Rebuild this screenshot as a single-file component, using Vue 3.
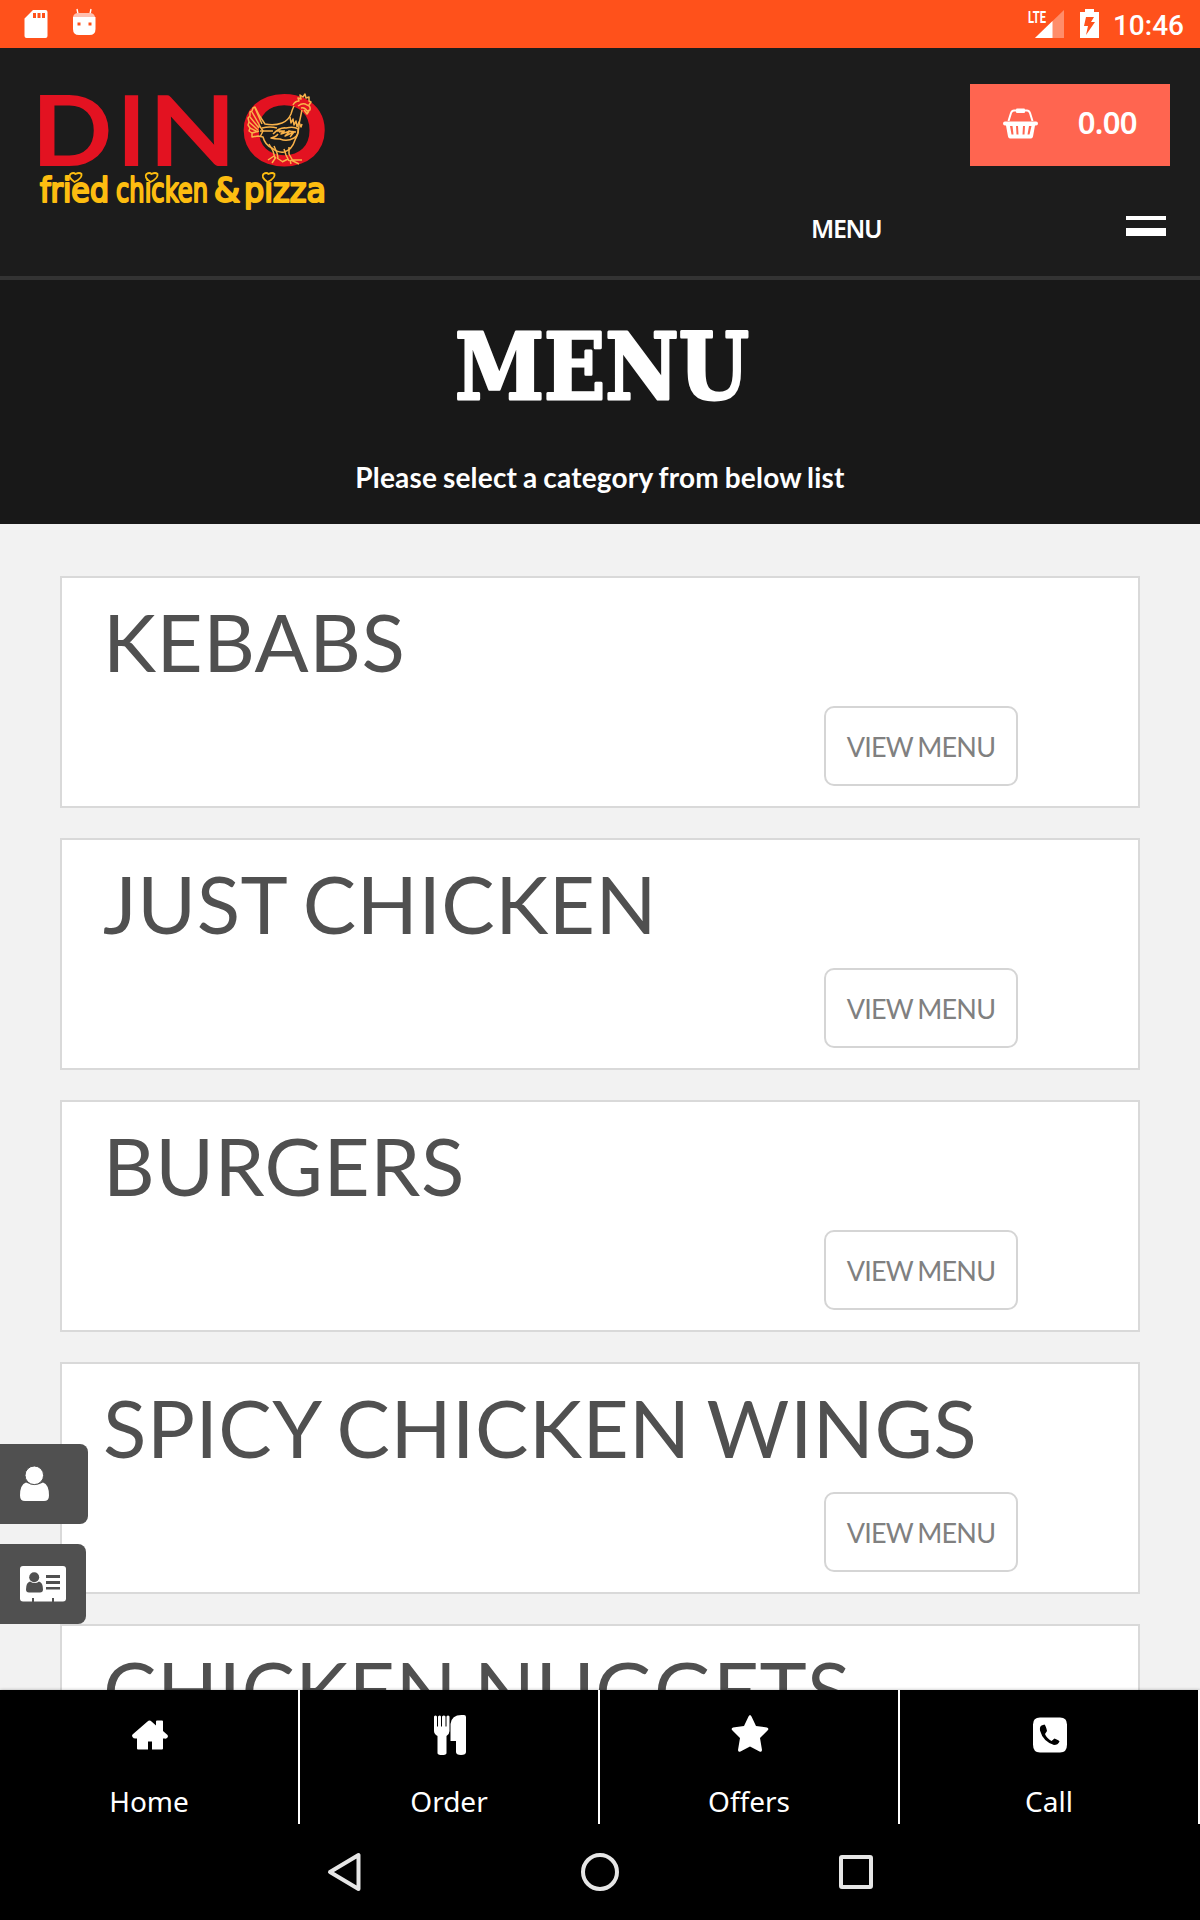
<template>
  <div class="screen">
    <div class="status-bar">
      <div class="status-left">
        <svg class="sd-icon" viewBox="0 0 24 28">
          <path fill="#fff" fill-rule="evenodd" d="M9 0h12.500q2 0 2 2v24q0 2-2 2H2.500q-2 0-2-2V8.500zM9 3v5h3V3zM13.500 3v5h3V3zM18 3v5h3V3z" />
        </svg>
        <svg class="droid-icon" viewBox="0 0 24 28">
          <path d="M6 6L5 1M18 6l1-5" stroke="#fff" stroke-width="1.400" />
          <path d="M1 9q1-4 5-4h12q4 0 5 4z" fill="#ffc0b0" />
          <path fill="#fff" fill-rule="evenodd" d="M1 9h22.500v12q0 6-6 6H7q-6 0-6-6zM5.500 14.500v3h3v-3zM16.500 14.500v3h3v-3z" />
        </svg>
      </div>
      <div class="status-right">
        <svg class="signal-icon" viewBox="0 0 36 30">
          <text x="0" y="13.500" textLength="18" lengthAdjust="spacingAndGlyphs" class="lte">LTE</text>
          <path d="M36 1v28H7z" fill="#fff" opacity="0.350" />
          <path d="M24.500 12v17H7z" fill="#fff" />
        </svg>
        <svg class="battery-icon" viewBox="0 0 19 29">
          <path fill="#fff" fill-rule="evenodd" d="M5 0h9v3h5v26H0V3h5zM6 8l-2 9h4l-2 9 9-13h-4l3-5z" />
        </svg>
        <span class="clock">10:46</span>
      </div>
    </div>

    <header class="header">
      <svg class="logo" viewBox="0 0 300 130">
        <g class="logo-name">
          <text x="-4.500" y="81.500" textLength="81" lengthAdjust="spacingAndGlyphs">D</text>
          <text x="81" y="81.500">I</text>
          <text x="112.500" y="81.500" textLength="88" lengthAdjust="spacingAndGlyphs">N</text>
          <text x="203.500" y="81.500" textLength="89.500" lengthAdjust="spacingAndGlyphs">O</text>
        </g>
        <g class="hen">
          <path d="M258 22q-2 4-3 8-3 7-9 9-8 3-17 1l-6-9-4-8-2 1-1 3-2 1v4l-2 2 1 4-1 3 2 3-1 3 3 2v4l6-1 5 1q2 8 9 11 6 5 12 4 8-2 11-12 4-7 4-16l3-14" />
          <path d="M219 24l7 16M216 28l8 14M214 33l9 11M213 38l9 8M214 44l8 4M216 49l7-2M223 41l4 6-3 6" />
          <path d="M254 33l1 6 2-4 1 6 2-4 1 6 2-5 2 5 1-3" />
          <path d="M257 21q2-4 6-4l-1-3 3 1-1-4 3 2 2-3 1 4 3-1v4l2 1-2 3M262 22q5-4 9-1 4 1 3 5l-3 1q-2-4-6-3M268 26l3 4 2-3" />
          <path d="M237 50q7-7 13-6 8-2 12 1 1 6-4 9-7 4-14 1-6 0-9-1 5-1 7-4M243 48l5-1-3 3 9-3-5 5 9-4-4 5M241 47h8M252 47l8 1M226 44q8-2 15 0M224 47h13" />
          <path d="M233 60l4 7 2 7M238 62l3 7 1 5M248 65l2 6 3 6M253 63v7l4 7M238 72l-6 4M240 73l-4 6M241 74l6 4M252 75l-6 3M254 76l1 4M255 76l8 4M256 76l10 0" />
        </g>
        <g class="logo-tag">
          <text x="4" y="118" textLength="69" lengthAdjust="spacingAndGlyphs">fried</text>
          <text x="80" y="118" textLength="92" lengthAdjust="spacingAndGlyphs">chicken</text>
          <text x="178" y="118" textLength="26" lengthAdjust="spacingAndGlyphs">&amp;</text>
          <text x="208" y="118" textLength="82" lengthAdjust="spacingAndGlyphs">pizza</text>
        </g>
        <g class="hearts">
          <path d="M38.500 98q-7-5-4-8 3-2 5 0 4-2 6 0 1 4-7 8z" />
          <path d="M114.500 98q-7-5-4-8 3-2 5 0 4-2 6 0 1 4-7 8z" />
          <path d="M231.500 98q-7-5-4-8 3-2 5 0 4-2 6 0 1 4-7 8z" />
        </g>
      </svg>
      <div class="header-actions">
        <button class="cart">
          <svg class="basket-icon" viewBox="0 0 35 31">
            <path d="M5.500 13L8 5q1-2.500 3-2.500h13q2 0 3 2.500l2.500 8" fill="none" stroke="#fff" stroke-width="2" />
            <rect x="13" y="0.500" width="9" height="4.500" rx="1" fill="#fff" />
            <path fill="#fff" fill-rule="evenodd" d="M2 13.500h31q2 0 2 2t-2 2h-1l-2 11q-.5 2-2 2H7q-1.500 0-2-2L3 17.500H2q-2 0-2-2t2-2zM7 18l1.500 8.500h2L9.500 18zM13 18l.5 8.500h2L15 18zM20 18l-.5 8.500h2L22 18zM26 18l-1.500 8.500h2L28.500 18z" />
          </svg>
          <span class="cart-total">0.00</span>
        </button>
        <div class="nav-row">
          <span class="nav-label">MENU</span>
          <button class="burger" aria-label="Open menu">
            <span class="burger-thin"></span>
            <span class="burger-thick"></span>
          </button>
        </div>
      </div>
    </header>

    <section class="hero">
      <svg class="hero-title" viewBox="0 0 300 80">
        <text x="3" y="71.500" textLength="294" lengthAdjust="spacingAndGlyphs">MENU</text>
      </svg>
      <p class="hero-text">Please select a category from below list</p>
    </section>

    <main class="categories">
      <article v-for="category in categories" :key="category" class="card">
        <h2 class="card-title">{{ category }}</h2>
        <button class="view-button">VIEW MENU</button>
      </article>
    </main>

    <aside class="side-buttons">
      <button class="side-button side-user" aria-label="Account">
        <svg width="30" height="36" viewBox="0 0 30 36">
          <path d="M6 16.500q-6 2-6 13Q0 35 5 35h19q5 0 5-5.500 0-11-6-13-8 4.500-17 0z" fill="#fff" />
          <circle cx="14.300" cy="9.300" r="9.300" fill="#fff" stroke="#505050" stroke-width="1" />
        </svg>
      </button>
      <button class="side-button side-contact" aria-label="Contact">
        <svg width="46" height="36" viewBox="0 0 46 36">
          <rect width="46" height="35.500" rx="3" fill="#fff" />
          <g fill="#505050">
            <path d="M10 15.500q-4 1-4 8 0 3 3 3h11q3 0 3-3 0-7-4-8-4 3-9 0z" />
            <circle cx="14.200" cy="11.200" r="5" />
            <path d="M26 9h14v3H26zM26 15h14v3H26zM26 21h14v2.500H26zM12 32h2v4h-2zM32 32h2v4h-2z" />
          </g>
        </svg>
      </button>
    </aside>

    <nav class="tab-bar">
      <a v-for="tab in tabs" :key="tab.label" class="tab">
        <svg class="tab-icon" viewBox="0 0 40 40">
          <path :d="tab.icon" fill="#fff" fill-rule="evenodd" />
        </svg>
        <span class="tab-label">{{ tab.label }}</span>
      </a>
    </nav>

    <div class="android-nav">
      <svg viewBox="0 0 40 40"><path d="M34.500 3v34L6 20z" /></svg>
      <svg viewBox="0 0 40 40"><circle cx="20" cy="20" r="17" /></svg>
      <svg viewBox="0 0 40 40"><rect x="5" y="5" width="30" height="30" rx="1" /></svg>
    </div>
  </div>
</template>

<script setup>
const categories = [
  'KEBABS',
  'JUST CHICKEN',
  'BURGERS',
  'SPICY CHICKEN WINGS',
  'CHICKEN NUGGETS',
]

const tabs = [
  {
    label: 'Home',
    icon: 'M17.500 6.500q2-2 4 0l4.500 4V6.500q0-1 1-1h5q1 0 1 1V16l4.500 4q1 1 0 2.500t-3 1H33v10q0 1-1 1H22v-8h-4v8H8q-1 0-1-1v-10H5.500q-2 0-3-1.500t0-2.500z',
  },
  {
    label: 'Order',
    icon: 'M4 1.500q1.500-2 3 0v10h1v-10q2-2 3 0v10h1v-10q2-2 3.500 0v10h1v-10q1.500-2 3 0V16q0 3-3 5v17q0 2-4.500 2t-4.500-2V21q-3.500-2-3.500-5zM20.500 9q1-9 11-9h2.500q2 0 2 2v35q0 3-5 3t-5-3V26h-5.500z',
  },
  {
    label: 'Offers',
    icon: 'M18.500 1.500q1.500-3 3 0L26 11l11 1.500q2.500 1 .5 3L30 23l2 12q0 2.500-2.500 1.500L20 31.500l-9.500 5Q8 37.500 8 35l2-12-7.500-7.500q-2-2 .5-3L14 11z',
  },
  {
    label: 'Call',
    icon: 'M10 2.500h20q7 0 7 7v20q0 8-7 8H10q-7 0-7-8v-20q0-7 7-7zM11.500 10.500q-2 1-1.500 5 3 11 14 14.500 4 0 5.500-3.500 0-1-5-3l-3 2.500q-5-3-6.500-7l2-3q-1-5-2.500-6.500z',
  },
]
</script>

<style>
body {
  margin: 0;
  overflow: hidden;
}
</style>

<style scoped>
.screen {
  position: relative;
  display: flex;
  flex-direction: column;
  width: 1200px;
  height: 1920px;
  overflow: hidden;
  background: #f2f2f2;
  font-family: Lato, sans-serif;
}

button {
  padding: 0;
  border: none;
  background: none;
  font-family: inherit;
}

svg {
  display: block;
  flex-shrink: 0;
  overflow: visible;
}

.status-bar {
  display: flex;
  justify-content: space-between;
  flex-shrink: 0;
  height: 48px;
  padding: 0 16px 0 24px;
  box-sizing: border-box;
  background: #ff511b;
  color: #fff;
}

.status-left,
.status-right {
  display: flex;
  align-items: center;
}

.status-left {
  gap: 24px;
}

.sd-icon,
.droid-icon {
  width: 24px;
  height: 28px;
}

.droid-icon {
  margin-top: -4px;
}

.signal-icon {
  width: 36px;
  height: 30px;
  margin-right: 16px;
}

.lte {
  fill: #fff;
  font: 700 17px Roboto, sans-serif;
}

.battery-icon {
  width: 19px;
  height: 29px;
  margin: -2px 14px 0 0;
}

.clock {
  padding-top: 3px;
  font: 500 28px/1 Roboto, sans-serif;
}

.header {
  display: flex;
  justify-content: space-between;
  flex-shrink: 0;
  height: 232px;
  padding: 36px 30px 0 36px;
  box-sizing: border-box;
  border-bottom: 4px solid #333;
  background: #1c1c1c;
}

.logo {
  width: 300px;
  height: 130px;
}

.logo-name {
  fill: #e31221;
  font: 700 98px Lato, sans-serif;
}

.logo-tag {
  fill: #fdbd10;
  stroke: #fdbd10;
  stroke-width: 2.2;
  stroke-linejoin: round;
  font: 400 33px "DejaVu Sans", sans-serif;
}

.hearts {
  fill: #1c1c1c;
  stroke: #fdbd10;
  stroke-width: 1.8;
}

.hen {
  fill: none;
  stroke: #f9b24a;
  stroke-width: 1.5;
  stroke-linejoin: round;
}

.header-actions {
  display: flex;
  flex-direction: column;
  align-items: flex-end;
}

.cart {
  display: flex;
  align-items: center;
  justify-content: space-between;
  width: 200px;
  height: 82px;
  padding: 0 33px 4px 33px;
  box-sizing: border-box;
  background: #ff6550;
  color: #fff;
}

.basket-icon {
  width: 35px;
  height: 31px;
}

.cart-total {
  margin-top: -2px;
  font: 600 31px/1 "Noto Sans", sans-serif;
  letter-spacing: -0.6px;
}

.nav-row {
  display: flex;
  align-items: center;
  justify-content: space-between;
  width: 355px;
  margin-top: 44px;
  padding-right: 4px;
}

.nav-label {
  color: #fff;
  font: 600 25px/36px "Noto Sans", sans-serif;
  letter-spacing: -1.3px;
}

.burger {
  display: flex;
  flex-direction: column;
  gap: 8px;
  width: 40px;
  margin-top: -4px;
}

.burger-thin {
  height: 4px;
  background: #fff;
}

.burger-thick {
  height: 8px;
  background: #fff;
}

.hero {
  display: flex;
  flex-direction: column;
  align-items: center;
  flex-shrink: 0;
  height: 244px;
  padding-top: 47px;
  box-sizing: border-box;
  background: #181818;
  color: #fff;
}

.hero-title {
  width: 300px;
  height: 80px;
  margin-left: 4px;
}

.hero-title text {
  fill: #fff;
  stroke: #fff;
  stroke-width: 3;
  stroke-linejoin: round;
  font: 700 91px "DejaVu Serif", serif;
}

.hero-text {
  margin: 52px 0 0;
  font-size: 28px;
  font-weight: 700;
  line-height: 36px;
  letter-spacing: 0.2px;
  word-spacing: -1.2px;
}

.categories {
  display: flex;
  flex: 1;
  flex-direction: column;
  gap: 30px;
  min-height: 0;
  padding: 52px 60px 0;
  overflow: hidden;
}

.card {
  display: flex;
  flex-direction: column;
  flex-shrink: 0;
  height: 232px;
  padding: 13px 120px 20px 41px;
  box-sizing: border-box;
  border: 2px solid #d9d9d9;
  background: #fff;
}

.card-title {
  margin: 0;
  color: #505050;
  font-size: 80px;
  font-weight: 400;
  line-height: 100px;
  letter-spacing: 0.5px;
  word-spacing: -4px;
  white-space: nowrap;
}

.view-button {
  align-self: flex-end;
  width: 194px;
  height: 80px;
  margin-top: 15px;
  border: 2px solid #d5d5d5;
  border-radius: 10px;
  background: #fff;
  color: #808080;
  font-size: 27px;
  letter-spacing: -0.8px;
  word-spacing: -1.5px;
  white-space: nowrap;
}

.side-buttons {
  position: absolute;
  left: 0;
  top: 1444px;
  display: flex;
  flex-direction: column;
  gap: 20px;
}

.side-button {
  display: flex;
  align-items: center;
  height: 80px;
  padding-left: 20px;
  border-radius: 0 8px 8px 0;
  background: #505050;
}

.side-user {
  width: 88px;
}

.side-contact {
  width: 86px;
}

.tab-bar {
  z-index: 1;
  display: flex;
  flex-shrink: 0;
  height: 134px;
  background: #000;
  box-shadow: 0 0 3px rgba(0, 0, 0, 0.3);
}

.tab {
  display: flex;
  flex: 1;
  flex-direction: column;
  align-items: center;
  padding-top: 25px;
  border-right: 2px solid #fff;
  color: #fff;
}

.tab-icon {
  width: 40px;
  height: 40px;
  margin-left: 2px;
}

.tab-label {
  margin-top: 27px;
  font: 400 28px/38px "Noto Sans", sans-serif;
}

.android-nav {
  z-index: 1;
  display: flex;
  align-items: center;
  justify-content: center;
  gap: 216px;
  flex-shrink: 0;
  height: 96px;
  background: #000;
}

.android-nav svg {
  width: 40px;
  height: 40px;
  fill: none;
  stroke: #e6e6e6;
  stroke-width: 4;
  stroke-linejoin: round;
}
</style>
